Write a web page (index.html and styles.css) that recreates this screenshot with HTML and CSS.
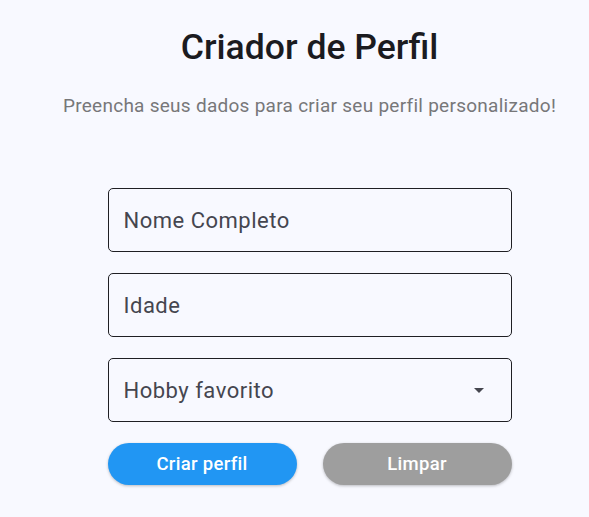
FILE: index.html
```html
<!DOCTYPE html>
<html lang="pt">
<head>
<meta charset="utf-8">
<title>Criador de Perfil</title>
<link rel="stylesheet" href="styles.css">
</head>
<body>
<main class="page">
  <h1 class="title">Criador de Perfil</h1>
  <p class="subtitle">Preencha seus dados para criar seu perfil personalizado!</p>
  <form class="form">
    <div class="field"><span class="label">Nome Completo</span></div>
    <div class="field"><span class="label">Idade</span></div>
    <div class="field select">
      <span class="label">Hobby favorito</span>
      <svg class="arrow" width="24" height="24" viewBox="0 0 24 24"><path d="M7 10l5 5 5-5z" fill="#45464f"/></svg>
    </div>
    <div class="actions">
      <button type="button" class="btn primary">Criar perfil</button>
      <button type="button" class="btn secondary">Limpar</button>
    </div>
  </form>
</main>
</body>
</html>
```
FILE: styles.css
```css
html, body {
  margin: 0;
  padding: 0;
  background: #f8f9ff;
}
body {
  font-family: Roboto, "Liberation Sans", sans-serif;
  width: 589px;
  height: 517px;
  overflow: hidden;
}
.page {
  display: flex;
  flex-direction: column;
  align-items: center;
  padding: 25px 0 0 30px;
}
.title {
  margin: 0;
  font-size: 35.6px;
  line-height: 44px;
  font-weight: 500;
  color: #1b1b1f;
}
.subtitle {
  margin: 25px 0 0;
  font-size: 19px;
  line-height: 24px;
  color: #777779;
  letter-spacing: 0.27px;
}
.form {
  margin-top: 70px;
  width: 404px;
  display: flex;
  flex-direction: column;
  gap: 21px;
}
.field {
  box-sizing: border-box;
  height: 64px;
  border: 1.3px solid #1f1f23;
  border-radius: 5px;
  display: flex;
  align-items: center;
  padding: 0 15px;
}
.label {
  font-size: 22px;
  color: #45464f;
  letter-spacing: 0.5px;
}
.select {
  justify-content: space-between;
  padding-right: 20px;
}
.arrow {
  display: block;
}
.actions {
  display: flex;
  gap: 26px;
}
.btn {
  flex: 1;
  height: 42px;
  border: none;
  border-radius: 21px;
  font-family: Roboto, "Liberation Sans", sans-serif;
  font-size: 18.5px;
  font-weight: 500;
  letter-spacing: 0.3px;
  color: #fff;
  box-shadow: 0 1px 3px rgba(0,0,0,0.25);
}
.primary { background: #2196f3; }
.secondary { background: #9e9e9e; }
```
